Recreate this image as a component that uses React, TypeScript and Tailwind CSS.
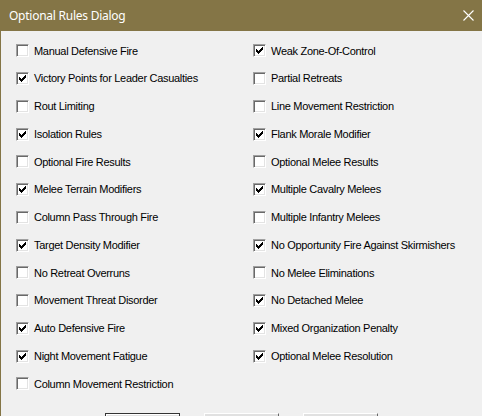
import React from "react";

type Rule = { label: string; checked: boolean };

const left: Rule[] = [
  { label: "Manual Defensive Fire", checked: false },
  { label: "Victory Points for Leader Casualties", checked: true },
  { label: "Rout Limiting", checked: false },
  { label: "Isolation Rules", checked: true },
  { label: "Optional Fire Results", checked: false },
  { label: "Melee Terrain Modifiers", checked: true },
  { label: "Column Pass Through Fire", checked: false },
  { label: "Target Density Modifier", checked: true },
  { label: "No Retreat Overruns", checked: false },
  { label: "Movement Threat Disorder", checked: false },
  { label: "Auto Defensive Fire", checked: true },
  { label: "Night Movement Fatigue", checked: true },
  { label: "Column Movement Restriction", checked: false },
];

const right: Rule[] = [
  { label: "Weak Zone-Of-Control", checked: true },
  { label: "Partial Retreats", checked: false },
  { label: "Line Movement Restriction", checked: false },
  { label: "Flank Morale Modifier", checked: true },
  { label: "Optional Melee Results", checked: false },
  { label: "Multiple Cavalry Melees", checked: true },
  { label: "Multiple Infantry Melees", checked: false },
  { label: "No Opportunity Fire Against Skirmishers", checked: true },
  { label: "No Melee Eliminations", checked: false },
  { label: "No Detached Melee", checked: true },
  { label: "Mixed Organization Penalty", checked: true },
  { label: "Optional Melee Resolution", checked: true },
];

// classic 7x7 check glyph, drawn pixel by pixel
const CHECK =
  "M6 0h1v1h-1z M5 1h2v1h-2z M0 2h1v1h-1z M4 2h3v1h-3z M0 3h2v1h-2z M3 3h3v1h-3z M0 4h5v1h-5z M1 5h3v1h-3z M2 6h1v1h-1z";

function Box({ checked }: { checked: boolean }) {
  return (
    <span className="flex h-[13px] w-[13px] shrink-0 items-center justify-center border border-b-white border-l-[#a0a0a0] border-r-white border-t-[#a0a0a0] bg-white shadow-[inset_1px_1px_0_#696969,inset_-1px_-1px_0_#e3e3e3]">
      {checked && (
        <svg width="7" height="7" viewBox="0 0 7 7" shapeRendering="crispEdges">
          <path d={CHECK} fill="#000" />
        </svg>
      )}
    </span>
  );
}

function Column({ rules }: { rules: Rule[] }) {
  return (
    <div className="flex flex-col">
      {rules.map((r) => (
        <label key={r.label} className="flex h-[27.75px] items-center gap-[5px]">
          <Box checked={r.checked} />
          <span className="whitespace-nowrap tracking-[-0.3px]">{r.label}</span>
        </label>
      ))}
    </div>
  );
}

export default function App() {
  return (
    <div className="flex h-[416px] w-[482px] flex-col overflow-hidden border-l border-[#847546] bg-[#f0f0f0] font-['Liberation_Sans',Arial,sans-serif] text-[11px] text-black">
      {/* title bar */}
      <div className="flex h-[31px] shrink-0 items-center justify-between bg-[#847546] pl-[8px] pr-[8px]">
        <span className="font-['Noto_Sans',sans-serif] text-[12px] tracking-[-0.25px] text-white">Optional Rules Dialog</span>
        <svg width="11" height="11" viewBox="0 0 11 11">
          <path d="M0.5 0.5L10.5 10.5M10.5 0.5L0.5 10.5" stroke="#fff" strokeWidth="1.1" />
        </svg>
      </div>

      <div className="grid grid-cols-[237px_1fr] pl-[15px] pt-[6px]">
        <Column rules={left} />
        <Column rules={right} />
      </div>

      {/* buttons: only their top edges are in view */}
      <div className="mt-[15px] flex justify-center gap-[24px] pr-[1px]">
        <button aria-label="OK" className="h-[23px] w-[75px] border border-[#333] bg-[#e1e1e1] shadow-[inset_1px_1px_0_#fff]" />
        <button aria-label="Cancel" className="h-[23px] w-[75px] border border-b-[#696969] border-l-white border-r-[#696969] border-t-white bg-[#e1e1e1]" />
        <button aria-label="Help" className="h-[23px] w-[75px] border border-b-[#696969] border-l-white border-r-[#696969] border-t-white bg-[#e1e1e1]" />
      </div>
    </div>
  );
}
